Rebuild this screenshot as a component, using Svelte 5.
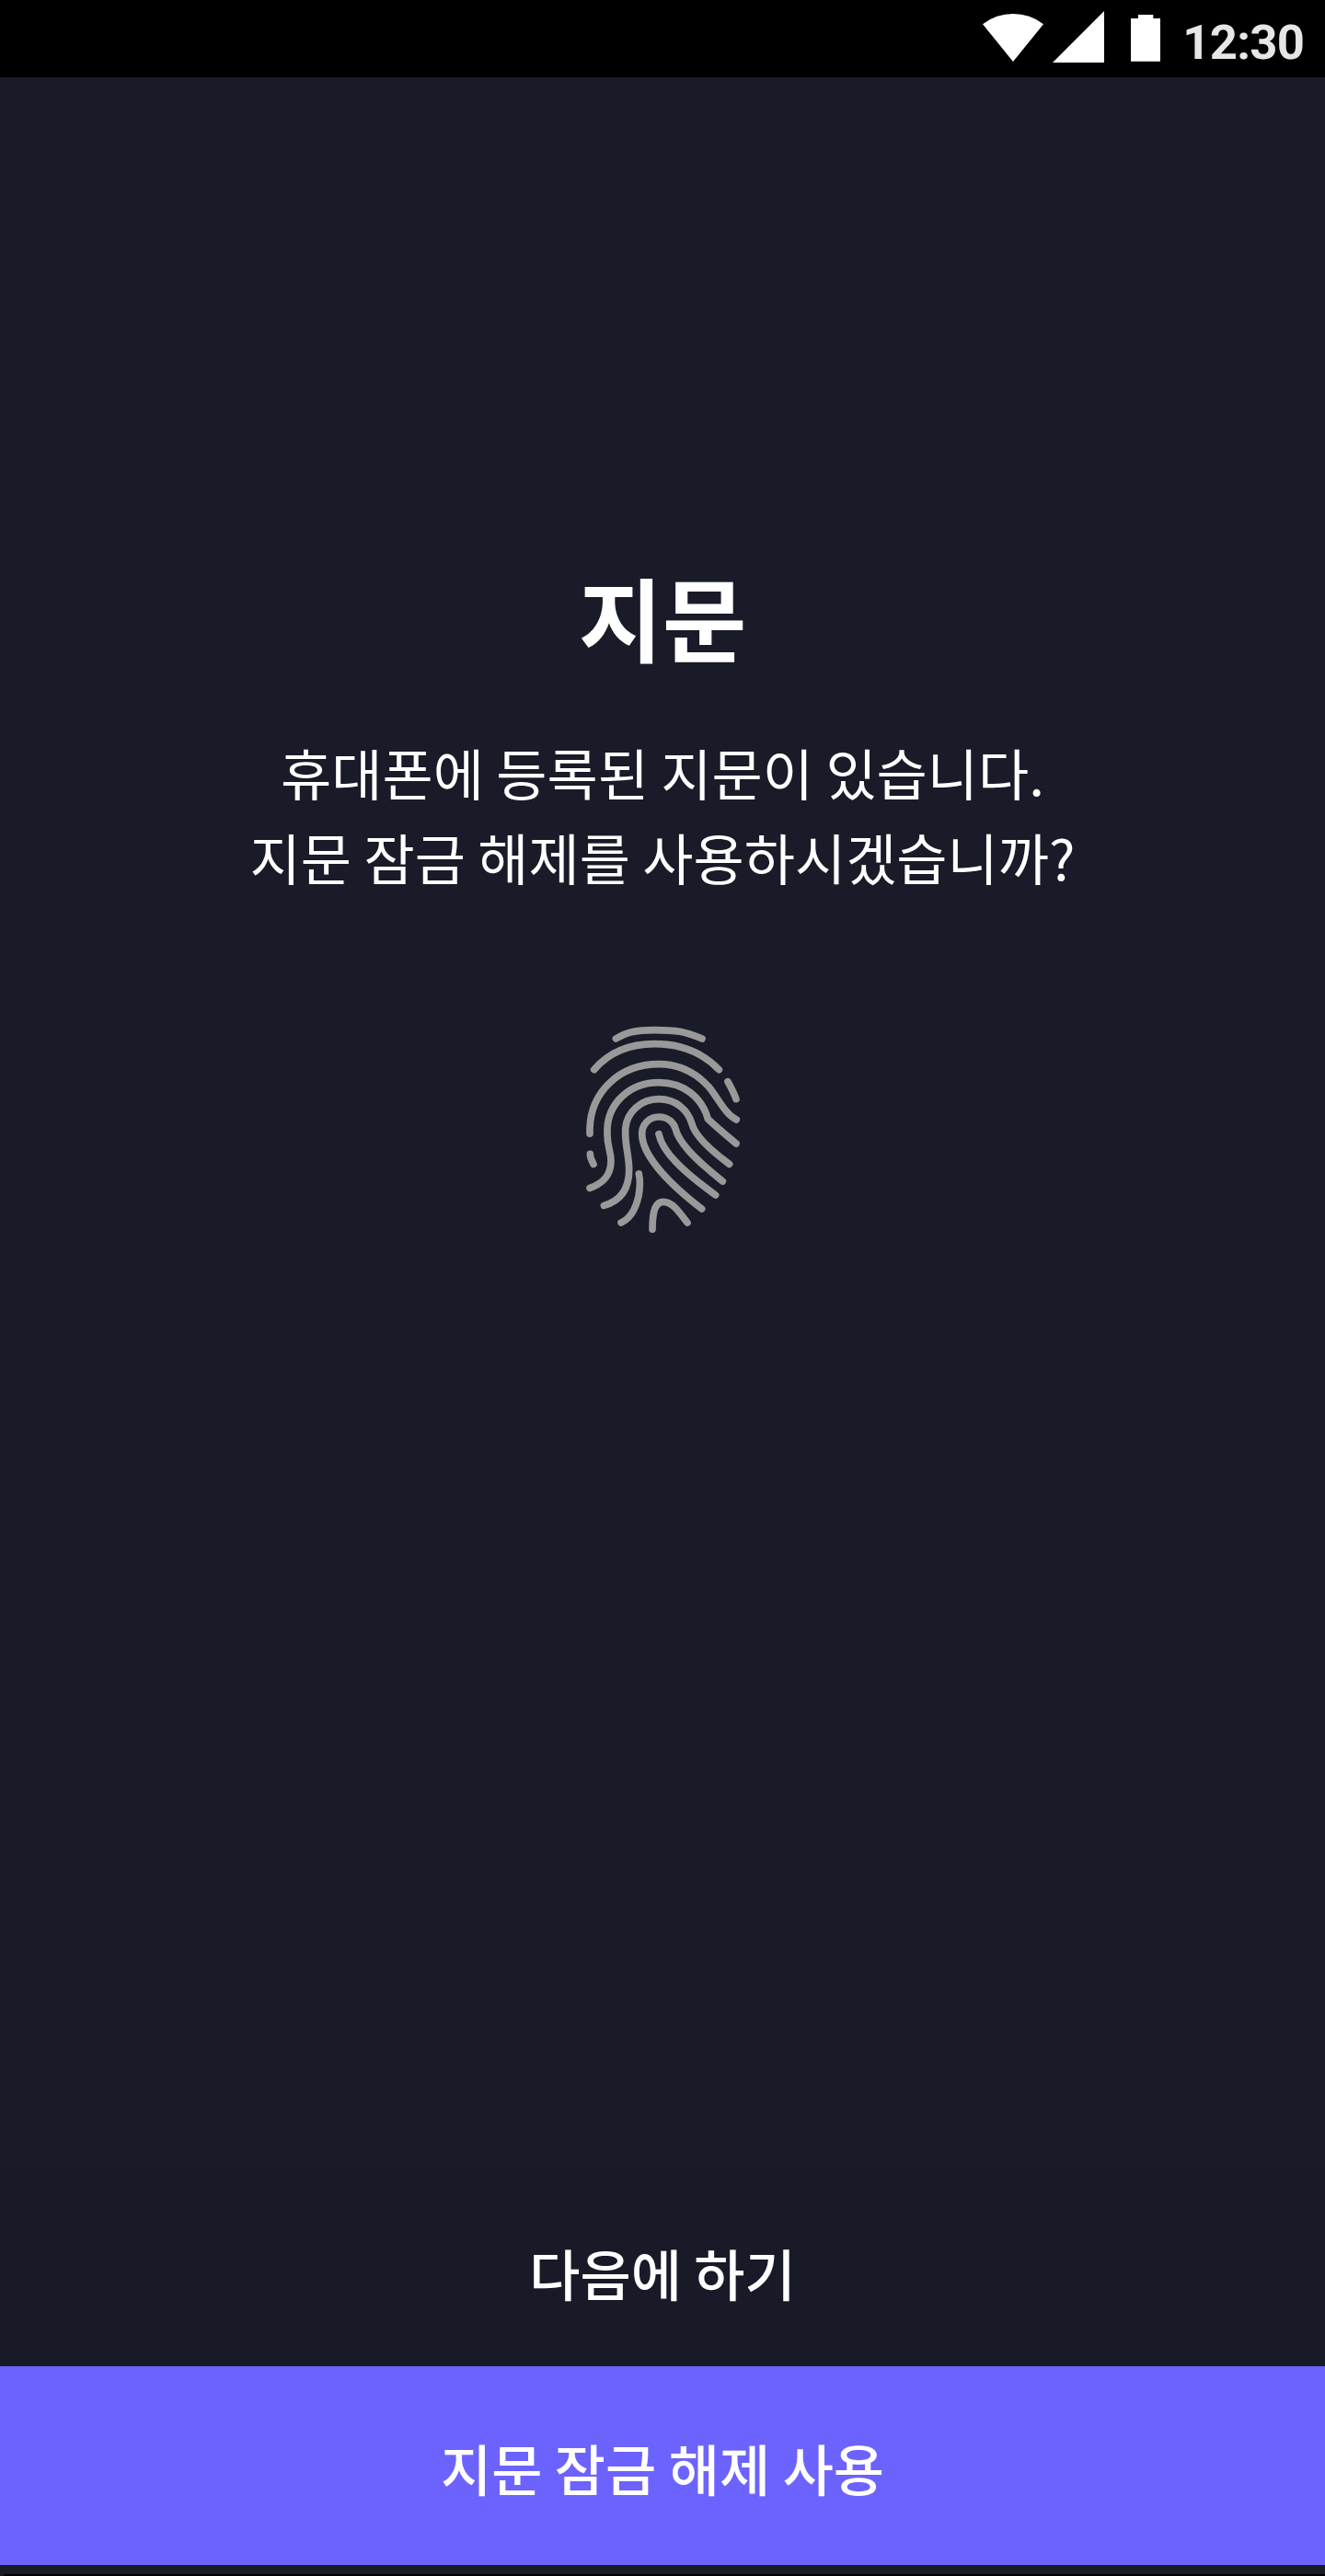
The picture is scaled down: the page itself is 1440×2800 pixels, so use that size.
<script>
  // Ridges of the fingerprint, drawn as round-capped strokes.
  const ridges = [
    'M148 87C184 67 208 59 274 59C346 59 370 63 429 87',
    'M77 188C125 132 190 104 274 104C358 104 430 132 484 188',
    'M63 397V380C66 262 158 170 288 170C360 170 410 200 450 243C480 278 504 334 541 351',
    'M513 227C524 247 532 261 540 284',
    'M63 574C110 557 132 530 132 485C132 455 120 440 120 400V380C124 300 190 230 288 230C370 230 430 280 448 349C470 370 505 400 540 429',
    'M109 631C165 615 191 575 191 515C191 470 179 440 179 395V380C184 325 230 284 288 284C345 284 382 320 395 362C404 402 450 446 518 496',
    'M428 642C340 574 233 475 233 397C233 365 258 342 288 342C318 342 337 362 342 380C353 425 400 475 496 552',
    'M288 398C300 455 360 515 473 597',
    'M64 463C64 475 69 485 75 496',
    'M223 528C228 550 227 572 222 600C212 645 192 675 165 687',
    'M267 709C267 640 280 619 302 619C330 619 350 645 381 687',
  ];
</script>

<div class="screen">
  <header class="status">
    <svg class="wifi" viewBox="0 0 198 168" aria-hidden="true"><path d="M0 43A160 160 0 0 1 198 43L99 165Z" /></svg>
    <svg class="signal" viewBox="0 0 168 168" aria-hidden="true"><path d="M168 0V168H0Z" /></svg>
    <svg class="battery" viewBox="0 0 97 152" aria-hidden="true"><path d="M24 0H73V12H97V152H0V12H24Z" /></svg>
    <span class="time">12:30</span>
  </header>

  <main class="content">
    <h1>지문</h1>
    <p>휴대폰에 등록된 지문이 있습니다.<br />지문 잠금 해제를 사용하시겠습니까?</p>
    <svg class="print" viewBox="0 0 600 750" aria-hidden="true">
      {#each ridges as d}
        <path {d} />
      {/each}
    </svg>
  </main>

  <footer class="actions">
    <button class="later">다음에 하기</button>
    <button class="use">지문 잠금 해제 사용</button>
    <div class="edge"></div>
  </footer>
</div>

<style>
  :global(body) {
    background: #1a1b29;
  }
  .screen {
    display: flex;
    flex-direction: column;
    width: 1440px;
    height: 2800px;
    overflow: hidden;
    background: #1a1b29;
    color: #fff;
    font-family: 'Noto Sans CJK KR', sans-serif;
  }
  .status {
    display: flex;
    align-items: flex-start;
    flex: none;
    box-sizing: border-box;
    height: 84px;
    padding: 12px 0 0 1067.6px;
    background: #000;
    fill: #fff;
  }
  .wifi {
    width: 66px;
    height: 56px;
    flex: none;
  }
  .signal {
    width: 56px;
    height: 56px;
    margin-left: 10.4px;
    flex: none;
  }
  .battery {
    width: 32.3px;
    height: 50.7px;
    margin: 4px 0 0 29px;
    flex: none;
  }
  .time {
    margin-left: 24px;
    color: #e6e6e6;
    font: 700 52.6px/69px Roboto, sans-serif;
    letter-spacing: -0.7px;
  }
  .content {
    display: flex;
    flex: 1;
    flex-direction: column;
    align-items: center;
    text-align: center;
  }
  h1 {
    margin: 511px 0 0;
    font-size: 99.3px;
    font-weight: 700;
    line-height: 148px;
  }
  p {
    margin: 50px 0 0;
    font-size: 60px;
    font-weight: 400;
    line-height: 92.3px;
    white-space: nowrap;
  }
  .print {
    width: 200px;
    height: 250px;
    margin-top: 122px;
    fill: none;
    stroke: #999;
    stroke-width: 23;
    stroke-linecap: round;
    stroke-linejoin: round;
  }
  .actions {
    display: flex;
    flex: none;
    flex-direction: column;
  }
  button {
    height: 216px;
    margin: 0;
    padding: 0;
    border: 0;
    color: #fff;
    font: 500 60px/88px 'Noto Sans CJK KR', sans-serif;
  }
  .later {
    padding-top: 12px;
    background: #191a28;
  }
  .use {
    padding-top: 4px;
    background: #6c63ff;
  }
  .edge {
    height: 12px;
    background: linear-gradient(#000, #000) 4px 10px no-repeat #1a1b29;
  }
</style>
